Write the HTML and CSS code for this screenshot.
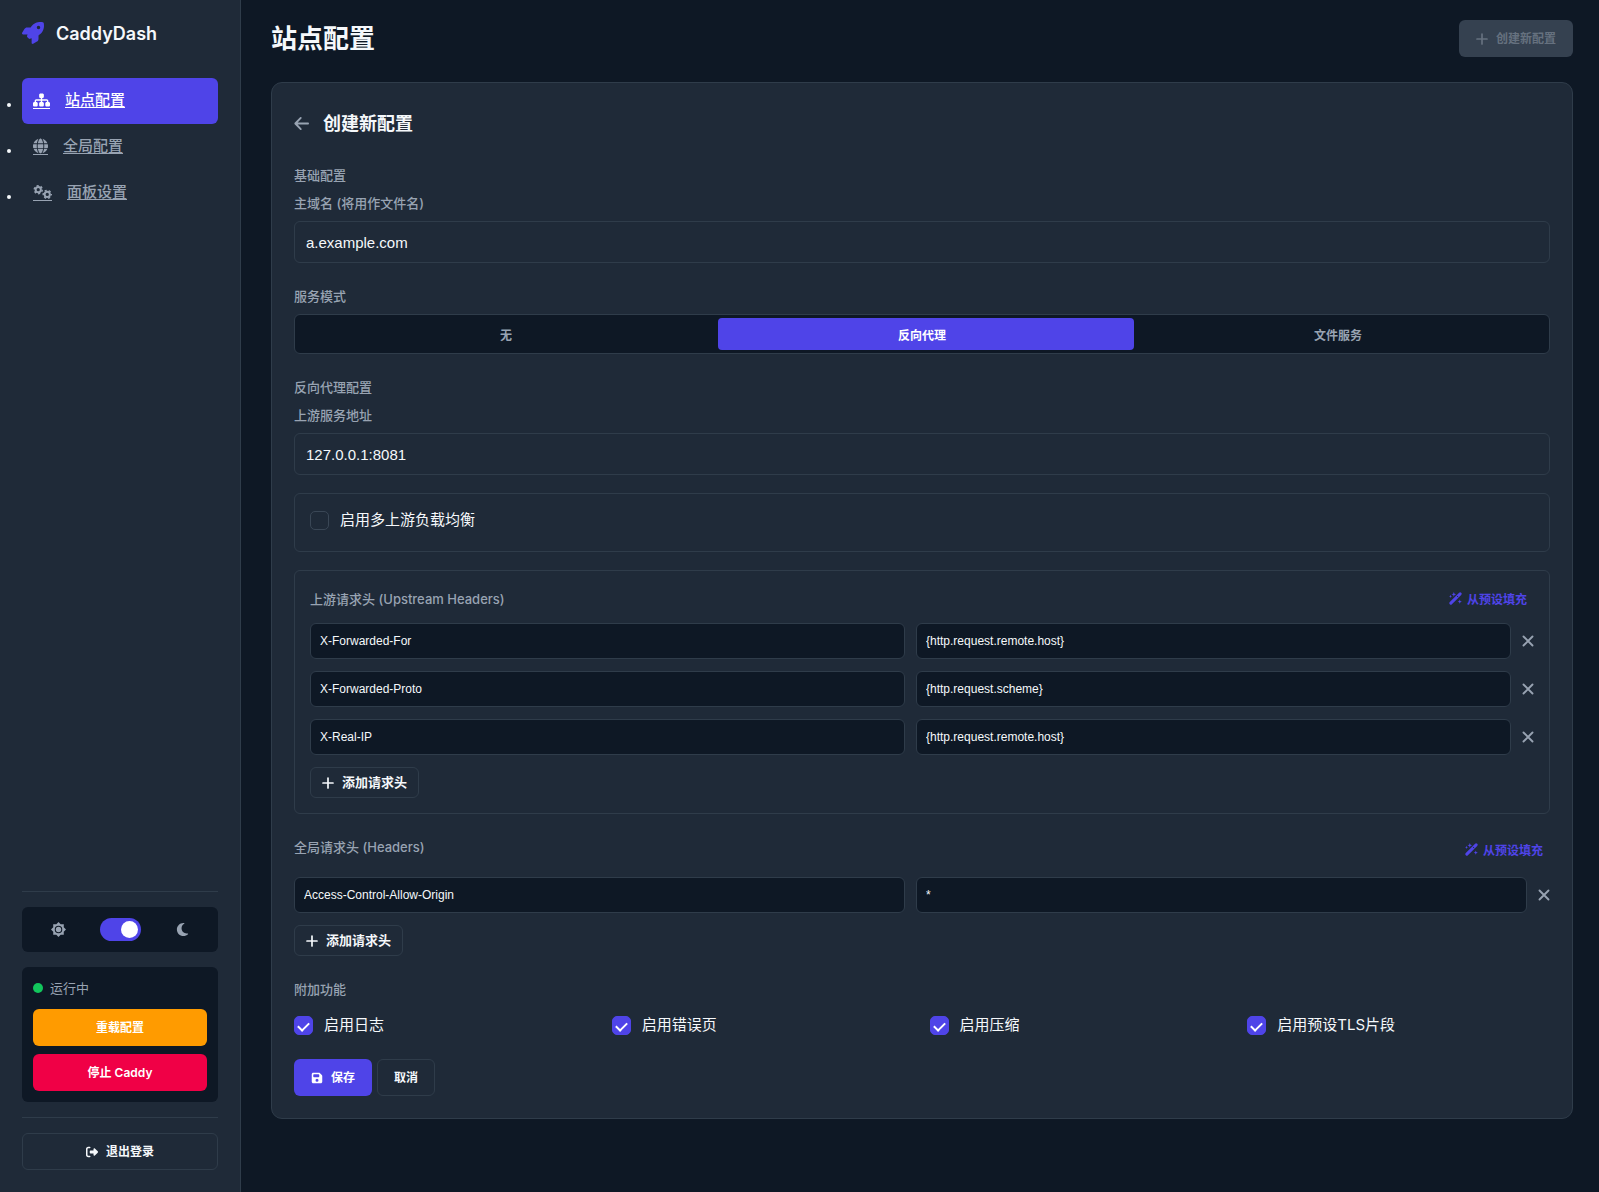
FILE: index.html
```html
<!DOCTYPE html>
<html lang="zh-CN">
<head>
    <meta charset="UTF-8">
    <meta name="viewport" content="width=device-width, initial-scale=1.0">
    <title>CaddyDash</title>
    <link rel="stylesheet" href="styles.css">
</head>
<body>
    <!-- Icon sprite -->
    <svg class="sprite" aria-hidden="true">
        <symbol id="icon-rocket" viewBox="0 0 512 512">
            <path d="M156.6 384.9L125.7 354c-8.5-8.5-11.5-20.8-7.7-32.2c3-8.9 7-20.5 11.8-33.8L24 288c-8.6 0-16.6-4.6-20.9-12.1s-4.2-16.7 .2-24.1l52.5-88.5c13-21.9 36.5-35.3 61.9-35.3l82.3 0c2.4-4 4.8-7.7 7.2-11.3C289.1-4.1 411.1-8.1 483.9 5.3c11.6 2.1 20.6 11.2 22.8 22.8c13.4 72.9 9.3 194.8-111.4 276.7c-3.5 2.4-7.3 4.8-11.3 7.2l0 82.3c0 25.4-13.4 49-35.3 61.9l-88.5 52.5c-7.4 4.4-16.6 4.5-24.1 .2s-12.1-12.2-12.1-20.9l0-107.2c-14.1 4.9-26.4 8.9-35.7 11.9c-11.2 3.6-23.4 .5-31.8-7.8zM384 168a40 40 0 1 0 0-80 40 40 0 1 0 0 80z"/>
        </symbol>
        <symbol id="icon-sitemap" viewBox="0 0 576 512">
            <path d="M208 80c0-26.5 21.5-48 48-48l64 0c26.5 0 48 21.5 48 48l0 64c0 26.5-21.5 48-48 48l-8 0 0 40 152 0c30.9 0 56 25.1 56 56l0 32 8 0c26.5 0 48 21.5 48 48l0 64c0 26.5-21.5 48-48 48l-64 0c-26.5 0-48-21.5-48-48l0-64c0-26.5 21.5-48 48-48l8 0 0-32c0-4.4-3.6-8-8-8l-152 0 0 40 8 0c26.5 0 48 21.5 48 48l0 64c0 26.5-21.5 48-48 48l-64 0c-26.5 0-48-21.5-48-48l0-64c0-26.5 21.5-48 48-48l8 0 0-40-152 0c-4.4 0-8 3.6-8 8l0 32 8 0c26.5 0 48 21.5 48 48l0 64c0 26.5-21.5 48-48 48l-64 0c-26.5 0-48-21.5-48-48l0-64c0-26.5 21.5-48 48-48l8 0 0-32c0-30.9 25.1-56 56-56l152 0 0-40-8 0c-26.5 0-48-21.5-48-48l0-64z"/>
        </symbol>
        <symbol id="icon-globe" viewBox="0 0 512 512">
            <path d="M352 256c0 22.2-1.2 43.6-3.3 64l-185.3 0c-2.2-20.4-3.3-41.8-3.3-64s1.2-43.6 3.3-64l185.3 0c2.2 20.4 3.3 41.8 3.3 64zm28.8-64l123.1 0c5.3 20.5 8.1 41.9 8.1 64s-2.8 43.5-8.1 64l-123.1 0c2.1-20.6 3.2-42 3.2-64s-1.1-43.4-3.2-64zm112.6-32l-116.7 0c-10-63.9-29.8-117.4-55.3-151.6c78.3 20.7 142 77.5 171.9 151.6zm-149.1 0l-176.6 0c6.1-36.4 15.5-68.6 27-94.7c10.5-23.6 22.2-40.7 33.5-51.5C239.4 3.2 248.7 0 256 0s16.6 3.2 27.8 13.8c11.3 10.8 23 27.9 33.5 51.5c11.6 26 20.9 58.2 27 94.7zm-209 0L18.6 160C48.6 85.9 112.2 29.1 190.6 8.4C165.1 42.6 145.3 96.1 135.3 160zM8.1 192l123.1 0c-2.1 20.6-3.2 42-3.2 64s1.1 43.4 3.2 64L8.1 320C2.8 299.5 0 278.1 0 256s2.8-43.5 8.1-64zM194.7 446.6c-11.6-26-20.9-58.2-27-94.6l176.6 0c-6.1 36.4-15.5 68.6-27 94.6c-10.5 23.6-22.2 40.7-33.5 51.5C272.6 508.8 263.3 512 256 512s-16.6-3.2-27.8-13.8c-11.3-10.8-23-27.9-33.5-51.5zM135.3 352c10 63.9 29.8 117.4 55.3 151.6C112.2 482.9 48.6 426.1 18.6 352l116.7 0zm358.1 0c-30 74.1-93.6 130.9-171.9 151.6c25.5-34.2 45.2-87.7 55.3-151.6l116.7 0z"/>
        </symbol>
        <symbol id="icon-gears" viewBox="0 0 640 512">
            <g fill="none" stroke="currentColor">
                <circle cx="176" cy="176" r="88" stroke-width="66"/>
                <circle cx="176" cy="176" r="136" stroke-width="48" stroke-dasharray="71.2 71.2"/>
                <circle cx="480" cy="336" r="88" stroke-width="66"/>
                <circle cx="480" cy="336" r="136" stroke-width="48" stroke-dasharray="71.2 71.2" stroke-dashoffset="36"/>
            </g>
        </symbol>
        <symbol id="icon-sun" viewBox="0 0 512 512">
            <path fill-rule="evenodd" d="M256 0L330 77 437 75 435 182 512 256 435 330 437 437 330 435 256 512 182 435 75 437 77 330 0 256 77 182 75 75 182 77zM256 128a128 128 0 1 0 0 256 128 128 0 1 0 0-256z"/>
            <circle cx="256" cy="256" r="92"/>
        </symbol>
        <symbol id="icon-moon" viewBox="0 0 384 512">
            <path d="M223.5 32C100 32 0 132.3 0 256S100 480 223.5 480c60.6 0 115.5-24.2 155.8-63.4c5-4.9 6.3-12.5 3.1-18.7s-10.1-9.7-17-8.5c-9.8 1.7-19.8 2.6-30.1 2.6c-96.9 0-175.5-78.8-175.5-176c0-65.8 36-123.1 89.3-153.3c6.1-3.5 9.2-10.5 7.7-17.3s-7.3-11.9-14.3-12.5c-6.3-.5-12.6-.8-19-.8z"/>
        </symbol>
        <symbol id="icon-logout" viewBox="0 0 512 512">
            <path d="M377.9 105.9L500.7 228.7c7.2 7.2 11.3 17.1 11.3 27.3s-4.1 20.1-11.3 27.3L377.9 406.1c-6.4 6.4-15 9.9-24 9.9c-18.7 0-33.9-15.2-33.9-33.9l0-62.1-128 0c-17.7 0-32-14.3-32-32l0-64c0-17.7 14.3-32 32-32l128 0 0-62.1c0-18.7 15.2-33.9 33.9-33.9c9 0 17.6 3.6 24 9.9zM160 96L96 96c-17.7 0-32 14.3-32 32l0 256c0 17.7 14.3 32 32 32l64 0c17.7 0 32 14.3 32 32s-14.3 32-32 32l-64 0c-53 0-96-43-96-96L0 128C0 75 43 32 96 32l64 0c17.7 0 32 14.3 32 32s-14.3 32-32 32z"/>
        </symbol>
        <symbol id="icon-save" viewBox="0 0 448 512">
            <path fill-rule="evenodd" d="M64 32C28.7 32 0 60.7 0 96L0 416c0 35.3 28.7 64 64 64l320 0c35.3 0 64-28.7 64-64l0-242.7c0-17-6.7-33.3-18.7-45.3L352 50.7C340 38.7 323.7 32 306.7 32L64 32zm0 96c0-17.7 14.3-32 32-32l192 0c17.7 0 32 14.3 32 32l0 64c0 17.7-14.3 32-32 32L96 224c-17.7 0-32-14.3-32-32l0-64zM224 288a64 64 0 1 1 0 128 64 64 0 1 1 0-128z"/>
        </symbol>
        <symbol id="icon-plus" viewBox="0 0 12 12">
            <path d="M6 1v10M1 6h10" fill="none" stroke="currentColor" stroke-width="1.7" stroke-linecap="round"/>
        </symbol>
        <symbol id="icon-close" viewBox="0 0 12 12">
            <path d="M1.5 1.5l9 9M10.5 1.5l-9 9" fill="none" stroke="currentColor" stroke-width="1.9" stroke-linecap="round"/>
        </symbol>
        <symbol id="icon-back" viewBox="0 0 16 16">
            <path d="M7.2 2L1.4 8l5.8 6M1.6 8H15" fill="none" stroke="currentColor" stroke-width="2" stroke-linecap="round" stroke-linejoin="round"/>
        </symbol>
        <symbol id="icon-wand" viewBox="0 0 14 14">
            <path d="M2 12L12 2" fill="none" stroke="currentColor" stroke-width="3.2" stroke-linecap="round"/>
            <path d="M8.6 4.2l1.4 1.4" fill="none" stroke="#1f2a38" stroke-width="1"/>
            <path d="M5.2 0l.7 1.8 1.8.7-1.8.7-.7 1.8-.7-1.8-1.8-.7 1.8-.7zM1.6 3l.5 1.2 1.2.5-1.2.5-.5 1.2-.5-1.2L0 4.7l1.1-.5zM11.6 8.2l.6 1.6 1.6.6-1.6.6-.6 1.6-.6-1.6-1.6-.6 1.6-.6z"/>
        </symbol>
    </svg>

    <div class="layout">
        <aside class="sidebar">
            <div class="brand">
                <svg class="brand-icon"><use href="#icon-rocket"/></svg>
                <span>CaddyDash</span>
            </div>

            <ul class="nav">
                <li><a href="#sites" class="nav-link active"><svg class="nav-icon nav-icon-sites"><use href="#icon-sitemap"/></svg><span>站点配置</span></a></li>
                <li><a href="#global" class="nav-link"><svg class="nav-icon"><use href="#icon-globe"/></svg><span>全局配置</span></a></li>
                <li><a href="#panel" class="nav-link"><svg class="nav-icon nav-icon-panel"><use href="#icon-gears"/></svg><span>面板设置</span></a></li>
            </ul>

            <div class="sidebar-footer">
                <div class="theme-box">
                    <svg class="theme-icon"><use href="#icon-sun"/></svg>
                    <input type="checkbox" class="switch" aria-label="深色模式" checked>
                    <svg class="theme-icon"><use href="#icon-moon"/></svg>
                </div>
                <div class="status-box">
                    <div class="status"><span class="status-dot"></span>运行中</div>
                    <button type="button" class="btn btn-warning">重载配置</button>
                    <button type="button" class="btn btn-danger">停止 Caddy</button>
                </div>
                <div class="logout">
                    <button type="button" class="btn btn-outline"><svg class="icon"><use href="#icon-logout"/></svg>退出登录</button>
                </div>
            </div>
        </aside>

        <main class="main">
            <header class="page-header">
                <h1>站点配置</h1>
                <button type="button" class="btn btn-disabled" disabled><svg class="icon"><use href="#icon-plus"/></svg>创建新配置</button>
            </header>

            <form class="card" onsubmit="event.preventDefault()">
                <div class="card-title">
                    <button type="button" class="icon-btn" aria-label="返回"><svg class="back-icon"><use href="#icon-back"/></svg></button>
                    <h2>创建新配置</h2>
                </div>

                <section class="group">
                    <div class="label">基础配置</div>
                    <label class="label" for="domain">主域名 (将用作文件名)</label>
                    <input type="text" class="input" id="domain" value="a.example.com">
                </section>

                <section class="group">
                    <div class="label">服务模式</div>
                    <div class="segmented">
                        <button type="button">无</button>
                        <button type="button" class="selected">反向代理</button>
                        <button type="button">文件服务</button>
                    </div>
                </section>

                <section class="group">
                    <div class="label">反向代理配置</div>
                    <label class="label" for="upstream">上游服务地址</label>
                    <input type="text" class="input" id="upstream" value="127.0.0.1:8081">

                    <div class="panel panel-check">
                        <label class="check"><input type="checkbox"><span>启用多上游负载均衡</span></label>
                    </div>

                    <div class="panel">
                        <div class="headers-top centered">
                            <div class="label">上游请求头 (Upstream Headers)</div>
                            <button type="button" class="preset"><svg class="wand-icon"><use href="#icon-wand"/></svg>从预设填充</button>
                        </div>
                        <div class="headers">
                            <div class="header-row">
                                <input type="text" aria-label="请求头名称" value="X-Forwarded-For">
                                <input type="text" aria-label="请求头值" value="{http.request.remote.host}">
                                <button type="button" class="icon-btn" aria-label="删除"><svg class="icon"><use href="#icon-close"/></svg></button>
                            </div>
                            <div class="header-row">
                                <input type="text" aria-label="请求头名称" value="X-Forwarded-Proto">
                                <input type="text" aria-label="请求头值" value="{http.request.scheme}">
                                <button type="button" class="icon-btn" aria-label="删除"><svg class="icon"><use href="#icon-close"/></svg></button>
                            </div>
                            <div class="header-row">
                                <input type="text" aria-label="请求头名称" value="X-Real-IP">
                                <input type="text" aria-label="请求头值" value="{http.request.remote.host}">
                                <button type="button" class="icon-btn" aria-label="删除"><svg class="icon"><use href="#icon-close"/></svg></button>
                            </div>
                            <button type="button" class="btn btn-outline btn-add"><svg class="icon"><use href="#icon-plus"/></svg>添加请求头</button>
                        </div>
                    </div>
                </section>

                <section class="group">
                    <div class="headers-top">
                        <div class="label">全局请求头 (Headers)</div>
                        <button type="button" class="preset"><svg class="wand-icon"><use href="#icon-wand"/></svg>从预设填充</button>
                    </div>
                    <div class="headers">
                        <div class="header-row">
                            <input type="text" aria-label="请求头名称" value="Access-Control-Allow-Origin">
                            <input type="text" aria-label="请求头值" value="*">
                            <button type="button" class="icon-btn" aria-label="删除"><svg class="icon"><use href="#icon-close"/></svg></button>
                        </div>
                        <button type="button" class="btn btn-outline btn-add"><svg class="icon"><use href="#icon-plus"/></svg>添加请求头</button>
                    </div>
                </section>

                <section class="group">
                    <div class="label">附加功能</div>
                    <div class="features">
                        <label class="check"><input type="checkbox" checked><span>启用日志</span></label>
                        <label class="check"><input type="checkbox" checked><span>启用错误页</span></label>
                        <label class="check"><input type="checkbox" checked><span>启用压缩</span></label>
                        <label class="check"><input type="checkbox" checked><span>启用预设TLS片段</span></label>
                    </div>
                </section>

                <div class="actions">
                    <button type="submit" class="btn btn-primary"><svg class="icon"><use href="#icon-save"/></svg>保存</button>
                    <button type="button" class="btn btn-outline">取消</button>
                </div>
            </form>
        </main>
    </div>
</body>
</html>
```

FILE: styles.css
```css
:root {
    --bg: #0e1825;
    --surface: #1f2a38;
    --border: #2f3c4a;
    --text: #f5f8fb;
    --muted: #98a3b2;
    --primary: #4f44e8;
}
* {
    box-sizing: border-box;
}
body {
    margin: 0;
    font-family: Inter, "Noto Sans CJK SC", sans-serif;
    font-size: 15px;
    background-color: var(--bg);
    color: var(--text);
}
h1, h2 {
    margin: 0;
    font-weight: 700;
}
button {
    font-family: inherit;
    cursor: pointer;
}
svg {
    display: block;
    flex: none;
    fill: currentColor;
}
.sprite {
    display: none;
}
.icon {
    width: 12px;
    height: 12px;
}
.layout {
    display: flex;
    min-height: 100vh;
}

/* Sidebar */
.sidebar {
    display: flex;
    flex-direction: column;
    flex: none;
    width: 241px;
    padding: 22px;
    background-color: var(--surface);
    border-right: 1px solid var(--border);
}
.brand {
    display: flex;
    align-items: center;
    gap: 12px;
    height: 22px;
    margin-bottom: 34px;
    font-size: 18px;
    font-weight: 600;
}
.brand-icon {
    width: 22px;
    height: 22px;
    color: var(--primary);
}
.nav {
    margin: 0;
    padding: 0;
    font-size: 13px;
}
.nav-link {
    display: flex;
    align-items: center;
    gap: 15px;
    height: 46px;
    padding: 0 11px 2px;
    border-radius: 6px;
    color: var(--muted);
    font-size: 15px;
    font-weight: 500;
    line-height: 22px;
    text-underline-offset: 2px;
}
.nav-link.active {
    background-color: var(--primary);
    color: white;
}
.nav-icon {
    width: 15px;
    height: 17px;
    border-bottom: 1px solid currentColor;
}
.nav-icon-sites {
    width: 17px;
}
.nav-icon-panel {
    width: 19px;
}
.sidebar-footer {
    display: flex;
    flex-direction: column;
    gap: 15px;
    margin-top: auto;
    padding-top: 15px;
    border-top: 1px solid var(--border);
}
.theme-box {
    display: flex;
    align-items: center;
    justify-content: center;
    gap: 34px;
    height: 45px;
    border-radius: 6px;
    background-color: var(--bg);
    color: var(--muted);
}
.theme-icon {
    width: 15px;
    height: 15px;
}
.switch {
    appearance: none;
    width: 41px;
    height: 23px;
    margin: 0;
    padding: 3px;
    border-radius: 12px;
    background-color: var(--border);
}
.switch::before {
    content: "";
    display: block;
    width: 17px;
    height: 17px;
    border-radius: 50%;
    background-color: white;
}
.switch:checked {
    background-color: var(--primary);
}
.switch:checked::before {
    margin-left: auto;
}
.status-box {
    display: flex;
    flex-direction: column;
    gap: 8px;
    padding: 11px;
    border-radius: 6px;
    background-color: var(--bg);
}
.status {
    display: flex;
    align-items: center;
    gap: 7px;
    margin-bottom: 3px;
    color: var(--muted);
    font-size: 13px;
    line-height: 20px;
}
.status-dot {
    width: 10px;
    height: 10px;
    border-radius: 50%;
    background-color: #12c65c;
}
.logout {
    display: grid;
    padding-top: 15px;
    border-top: 1px solid var(--border);
}

/* Buttons */
.btn {
    display: flex;
    align-items: center;
    justify-content: center;
    gap: 8px;
    padding: 10px 16px;
    border: 1px solid transparent;
    border-radius: 6px;
    color: white;
    font-size: 12px;
    font-weight: 600;
    line-height: 15px;
}
.btn-primary {
    background-color: var(--primary);
}
.btn-warning {
    background-color: #ff9b00;
}
.btn-danger {
    background-color: #f00046;
}
.btn-outline {
    background-color: transparent;
    border-color: var(--border);
    color: var(--text);
}
.btn-disabled {
    background-color: #354150;
    color: #66717f;
    cursor: not-allowed;
}
.btn-add {
    align-self: flex-start;
    padding: 7px 11px;
    font-size: 13px;
}
.icon-btn {
    padding: 0;
    border: none;
    background: none;
    color: var(--muted);
}

/* Main content */
.main {
    flex: 1;
    min-width: 0;
    padding: 20px 26px 30px 30px;
}
.page-header {
    display: flex;
    justify-content: space-between;
    align-items: center;
    margin-bottom: 25px;
}
.page-header h1 {
    font-size: 26px;
    line-height: 37px;
}
.card {
    display: flex;
    flex-direction: column;
    gap: 23px;
    padding: 22px;
    border: 1px solid var(--border);
    border-radius: 11px;
    background-color: var(--surface);
}
.card-title {
    display: flex;
    align-items: center;
    gap: 14px;
}
.card-title h2 {
    font-size: 18px;
    line-height: 37px;
}
.back-icon {
    width: 15px;
    height: 15px;
}
.group {
    display: flex;
    flex-direction: column;
}
.label {
    margin-bottom: 8px;
    color: var(--muted);
    font-size: 13px;
    font-weight: 500;
    line-height: 20px;
}
.input {
    width: 100%;
    height: 42px;
    padding: 0 11px;
    border: 1px solid var(--border);
    border-radius: 6px;
    background-color: transparent;
    color: var(--text);
    font-family: "Liberation Sans", Arial, sans-serif;
    font-size: 15px;
}
.segmented {
    display: grid;
    grid-template-columns: repeat(3, 1fr);
    height: 40px;
    padding: 3px;
    border: 1px solid var(--border);
    border-radius: 6px;
    background-color: var(--bg);
}
.segmented button {
    position: relative;
    z-index: 0;
    padding: 0;
    border: none;
    background: none;
    color: var(--muted);
    font-size: 12px;
    font-weight: 600;
}
.segmented .selected {
    color: white;
}
.segmented .selected::before {
    content: "";
    position: absolute;
    z-index: -1;
    inset: 0 -4px 0 4px;
    border-radius: 4px;
    background-color: var(--primary);
}
.panel {
    margin-top: 18px;
    padding: 15px;
    border: 1px solid var(--border);
    border-radius: 6px;
}
.panel-check {
    padding-bottom: 20px;
}
.check {
    display: flex;
    align-items: center;
    gap: 11px;
    line-height: 22px;
}
.check input {
    appearance: none;
    flex: none;
    width: 19px;
    height: 19px;
    margin: 0;
    padding: 3px 5px;
    border: 1px solid #3a4756;
    border-radius: 5px;
}
.check input:checked {
    border-color: var(--primary);
    background-color: var(--primary);
}
.check input:checked::before {
    content: "";
    display: block;
    width: 5px;
    height: 9px;
    border: solid white;
    border-width: 0 2px 2px 0;
    transform: rotate(45deg);
}
.headers-top {
    display: flex;
    justify-content: space-between;
    align-items: flex-start;
    margin-bottom: 14px;
}
.headers-top .label {
    margin-bottom: 0;
}
.headers-top.centered {
    align-items: center;
    margin-bottom: 11px;
}
.preset {
    display: flex;
    align-items: center;
    gap: 5px;
    height: 26px;
    padding: 0 7px 2px;
    border: none;
    background: none;
    color: var(--primary);
    font-size: 12px;
    font-weight: 600;
}
.wand-icon {
    width: 13px;
    height: 13px;
}
.headers {
    display: flex;
    flex-direction: column;
    gap: 12px;
}
.header-row {
    display: flex;
    align-items: center;
    gap: 11px;
}
.header-row input {
    flex: 1;
    min-width: 0;
    height: 36px;
    padding: 0 9px;
    border: 1px solid var(--border);
    border-radius: 6px;
    background-color: var(--bg);
    color: var(--text);
    font-family: "Liberation Sans", Arial, sans-serif;
    font-size: 12px;
}
.features {
    display: grid;
    grid-template-columns: repeat(4, 1fr);
    gap: 15px;
    margin-top: 7px;
}
.actions {
    display: flex;
    gap: 5px;
}
```
